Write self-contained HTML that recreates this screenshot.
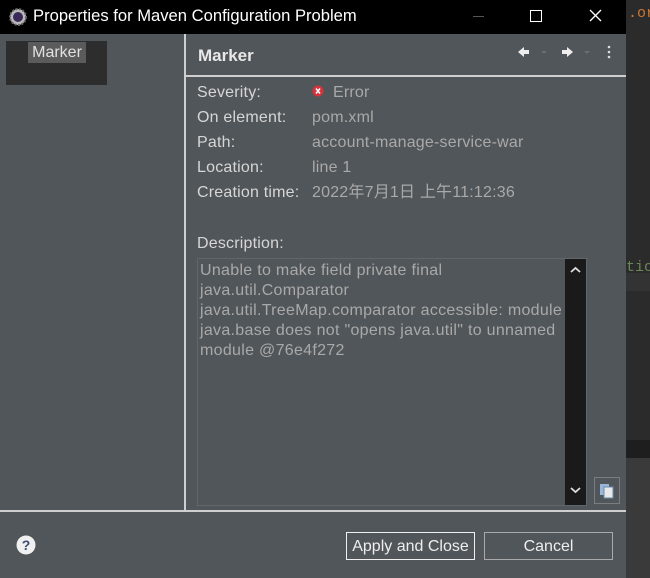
<!DOCTYPE html>
<html><head><style>
*{margin:0;padding:0;box-sizing:border-box}
body{width:650px;height:578px;background:#2b2b2b;position:relative;overflow:hidden;font-family:"Liberation Sans","Noto Sans CJK SC",sans-serif;font-size:16px;line-height:20px}
.a{position:absolute;white-space:nowrap}
#title{left:0;top:0;width:626px;height:34px;background:#000;color:#fff;font-size:16.6px}
#dlg{left:0;top:34px;width:626px;height:544px;background:#51565a}
.lbl{color:#d6d6d6;left:197px;letter-spacing:0.2px}
.val{color:#a9a9a9;left:312px;letter-spacing:0.2px}
</style></head><body>
<div class="a" id="title">
 <svg class="a" style="left:9px;top:8px" width="18" height="18" viewBox="0 0 18 18"><circle cx="9" cy="9" r="8" fill="#bbb" stroke="#666" stroke-dasharray="2 1.5" stroke-width="2"/><circle cx="9" cy="9" r="5" fill="#3a2a5a"/></svg>
 <div class="a" style="left:33px;top:6px">Properties for Maven Configuration Problem</div>
 <div class="a" style="left:473px;top:16px;width:11px;height:1px;background:#555"></div>
 <div class="a" style="left:530px;top:10px;width:12px;height:12px;border:1.3px solid #fff"></div>
 <svg class="a" style="left:589px;top:9px" width="13" height="13"><path d="M1 1L12 12M12 1L1 12" stroke="#fff" stroke-width="1.3"/></svg>
</div>
<div class="a" style="left:628px;top:4px;color:#cc7832;font-family:'Liberation Mono',monospace;font-size:15px">.or</div>
<div class="a" style="left:626px;top:258px;color:#6a8759;font-family:'Liberation Mono',monospace;font-size:15px">tio</div>
<div class="a" style="left:626px;top:273px;width:24px;height:18px;background:#333"></div>
<div class="a" style="left:626px;top:440px;width:24px;height:18px;background:#1e1e1e"></div>
<div class="a" style="left:626px;top:458px;width:24px;height:120px;background:#3a3a3a"></div>
<div class="a" id="dlg"></div>
<div class="a" style="left:6px;top:41px;width:101px;height:44px;background:#2d2d2d"></div>
<div class="a" style="left:28px;top:42px;width:58px;height:21px;background:#5b5b5b;color:#e0e0e0;text-align:center;line-height:21px">Marker</div>
<div class="a" style="left:184px;top:34px;width:2px;height:477px;background:#cfcfcf"></div>
<div class="a" style="left:186px;top:75px;width:440px;height:2px;background:#cfcfcf"></div>
<div class="a" style="left:0;top:510px;width:626px;height:2px;background:#cfcfcf"></div>
<div class="a" style="left:198px;top:46px;color:#e8e8e8;font-weight:bold;font-size:17px">Marker</div>
<svg class="a" style="left:515px;top:44px" width="100" height="16"><path d="M3 8L9 3V6H14V10H9V13Z" fill="#eee"/><path d="M26 7h6l-3 3z" fill="#6a6e72"/><path d="M58 8L52 3V6H47V10H52V13Z" fill="#eee"/><path d="M69 7h6l-3 3z" fill="#6a6e72"/><circle cx="94" cy="3" r="1.3" fill="#ddd"/><circle cx="94" cy="8" r="1.3" fill="#ddd"/><circle cx="94" cy="13" r="1.3" fill="#ddd"/></svg>
<div class="a lbl" style="top:83px">Severity:</div>
<div class="a lbl" style="top:108px">On element:</div>
<div class="a lbl" style="top:133px">Path:</div>
<div class="a lbl" style="top:158px">Location:</div>
<div class="a lbl" style="top:183px">Creation time:</div>
<div class="a lbl" style="top:234px">Description:</div>
<svg class="a" style="left:312px;top:85px" width="12" height="12"><circle cx="6" cy="6" r="5.5" fill="#d8323a"/><path d="M4 3.5L8 8.5M8 3.5L4 8.5" stroke="#fff" stroke-width="1.5"/></svg>
<div class="a val" style="left:333px;top:83px">Error</div>
<div class="a val" style="top:108px">pom.xml</div>
<div class="a val" style="top:133px">account-manage-service-war</div>
<div class="a val" style="top:158px">line 1</div>
<div class="a val" style="top:183px;height:20px;line-height:20px">2022年7月1日 上午11:12:36</div>
<div class="a" style="left:197px;top:258px;width:390px;height:248px;border:1px solid #61666a"></div>
<div class="a" style="left:200px;top:261px;color:#a9a9a9;line-height:20px;letter-spacing:0.3px">Unable to make field private final<br>java.util.Comparator<br>java.util.TreeMap.comparator accessible: module<br>java.base does not "opens java.util" to unnamed<br>module @76e4f272</div>
<div class="a" style="left:565px;top:259px;width:21px;height:246px;background:#1a1a1a"></div>
<svg class="a" style="left:565px;top:262px" width="21" height="240"><path d="M6 10L10.5 6L15 10" stroke="#ddd" stroke-width="1.8" fill="none"/><path d="M6 226L10.5 230L15 226" stroke="#ddd" stroke-width="1.8" fill="none"/></svg>
<div class="a" style="left:594px;top:477px;width:26px;height:27px;border:1px solid #7a7e82"></div>
<svg class="a" style="left:598px;top:482px" width="18" height="18"><rect x="2" y="2" width="9" height="11" fill="#9bb7d8"/><rect x="6" y="5" width="9" height="11" fill="#e8e8e8" stroke="#6a8ab0"/></svg>
<svg class="a" style="left:16px;top:535px" width="20" height="20"><circle cx="10" cy="10" r="9.5" fill="#f0f0f0"/><text x="10" y="15" text-anchor="middle" font-family="Liberation Sans" font-weight="bold" font-size="14" fill="#3c4e74">?</text></svg>
<div class="a" style="left:346px;top:532px;width:129px;height:28px;border:1.5px solid #f0f0f0;color:#eee;text-align:center;line-height:27px;font-size:16px">Apply and Close</div>
<div class="a" style="left:484px;top:532px;width:129px;height:28px;border:1px solid #aaa;color:#eee;text-align:center;line-height:27px;font-size:16px">Cancel</div>
</body></html>
